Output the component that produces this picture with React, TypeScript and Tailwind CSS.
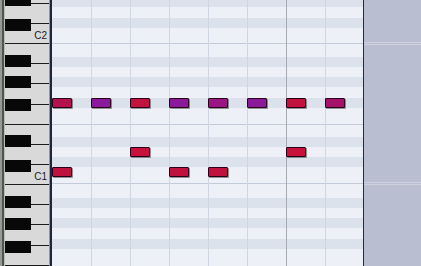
import React from 'react';

// grid rows top to bottom: [height, isBlackKeyRow, hasOctaveLine]
const rows: [number, boolean, boolean][] = [
  [7, true, false],
  [11, false, false],
  [10, true, false],
  [16, false, true],
  [13, false, false],
  [10, true, false],
  [10, false, false],
  [10, true, false],
  [11, false, false],
  [10, true, false],
  [17, false, true],
  [12, false, false],
  [10, true, false],
  [10, false, false],
  [10, true, false],
  [17, false, true],
  [14, false, false],
  [10, true, false],
  [10, false, false],
  [10, true, false],
  [11, false, false],
  [10, true, false],
  [17, false, false],
];

// white keys on the keyboard: [height, label]
const whiteKeys: [number, string][] = [
  [4, ''],
  [20, ''],
  [20, 'C2'],
  [20, ''],
  [20, ''],
  [21, ''],
  [20, ''],
  [20, ''],
  [20, ''],
  [20, 'C1'],
  [20, ''],
  [20, ''],
  [21, ''],
  [20, ''],
];

const blackKeyTops = [-6, 19, 55, 76, 99, 135, 160, 196, 218, 241];

const notes = [
  { beat: 0, top: 98, color: 'bg-[#b3124c]' },
  { beat: 1, top: 98, color: 'bg-[#8a1a9c]' },
  { beat: 2, top: 98, color: 'bg-[#c2123e]' },
  { beat: 3, top: 98, color: 'bg-[#8a1a9a]' },
  { beat: 4, top: 98, color: 'bg-[#9a1684]' },
  { beat: 5, top: 98, color: 'bg-[#8a1a9a]' },
  { beat: 6, top: 98, color: 'bg-[#c2123e]' },
  { beat: 7, top: 98, color: 'bg-[#a4126a]' },
  { beat: 2, top: 147, color: 'bg-[#c8123c]' },
  { beat: 6, top: 147, color: 'bg-[#c8123c]' },
  { beat: 0, top: 167, color: 'bg-[#c0123e]' },
  { beat: 3, top: 167, color: 'bg-[#c0123e]' },
  { beat: 4, top: 167, color: 'bg-[#c0123e]' },
];

const Keyboard = () => (
  <div className="flex h-full w-[50px] shrink-0">
    <div className="w-[2px] bg-[#979b97]" />
    <div className="w-[2px] bg-[#4f5650]" />
    <div className="w-[1px] bg-[#b8bcb8]" />
    <div className="relative flex-1 flex flex-col overflow-hidden bg-[#d9d9d9]">
      {whiteKeys.map(([h, label], i) => (
        <div
          key={i}
          style={{ height: h }}
          className="shrink-0 box-border border-b border-[#1c1c1c] flex items-end justify-end pr-[2px] pb-[2px]"
        >
          {label && (
            <span className="text-[10px] leading-none text-[#1a1a1a] font-['Liberation_Sans',Arial,sans-serif]">
              {label}
            </span>
          )}
        </div>
      ))}
      {blackKeyTops.map((t) => (
        <div key={t} style={{ top: t }} className="absolute left-0 w-[26px] h-[12px] bg-[#080808]" />
      ))}
    </div>
    <div className="w-[1px] bg-[#9098a8]" />
  </div>
);

const NoteGrid = () => (
  <div className="relative h-full w-[311px] shrink-0 overflow-hidden">
    <div className="flex flex-col">
      {rows.map(([h, black, line], i) => (
        <div
          key={i}
          style={{ height: h }}
          className={`shrink-0 box-border ${black ? 'bg-[#dbe2eb]' : 'bg-[#edf0f7]'} ${
            line ? 'border-b border-[#c4cbd8]' : ''
          }`}
        />
      ))}
    </div>
    {/* beat lines */}
    <div className="absolute inset-0 flex">
      <div className="w-[39px] shrink-0" />
      <div className="w-[39px] shrink-0 border-l border-[#d0d6e1]" />
      <div className="w-[39px] shrink-0 border-l border-[#d0d6e1]" />
      <div className="w-[39px] shrink-0 border-l border-[#d0d6e1]" />
      <div className="w-[39px] shrink-0 border-l border-[#d0d6e1]" />
      <div className="w-[39px] shrink-0 border-l border-[#d0d6e1]" />
      <div className="w-[39px] shrink-0 border-l border-[#a5aab5]" />
      <div className="flex-1 border-l border-[#d0d6e1]" />
    </div>
    {notes.map((n, i) => (
      <div
        key={i}
        style={{ left: n.beat * 39, top: n.top }}
        className={`absolute w-[20px] h-[10px] rounded-[1px] border border-[#2a0018] shadow-[1px_1px_0_#00000066] ${n.color}`}
      />
    ))}
  </div>
);

export default function App() {
  return (
    <div className="flex w-[421px] h-[266px] overflow-hidden bg-[#b9bed0]">
      <Keyboard />
      <div className="w-[2px] shrink-0 bg-[#1c2440]" />
      <NoteGrid />
      <div className="w-[1px] shrink-0 bg-[#1e2a4a]" />
      <div className="flex-1 flex flex-col">
        <div className="h-[42px] shrink-0" />
        <div className="h-[3px] shrink-0 border-y border-[#cdd1dd]" />
        <div className="h-[137px] shrink-0" />
        <div className="h-[3px] shrink-0 border-y border-[#cdd1dd]" />
      </div>
    </div>
  );
}
